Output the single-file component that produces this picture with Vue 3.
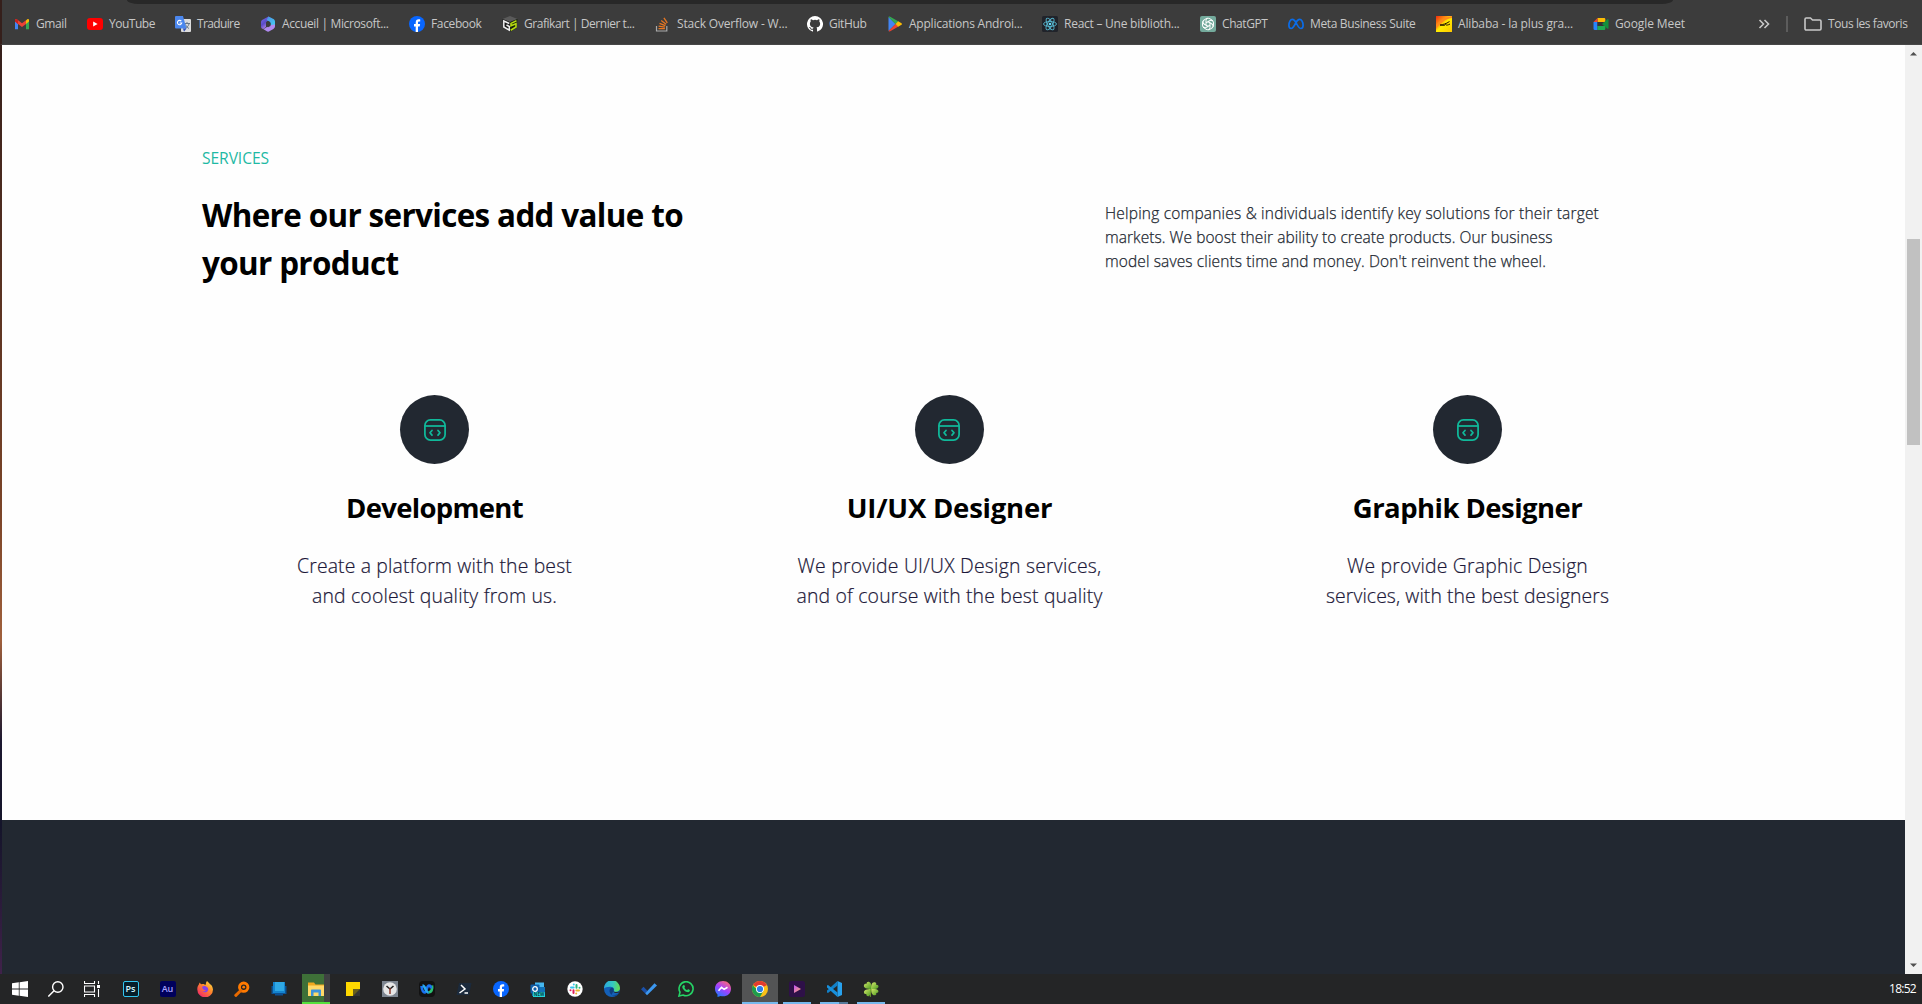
<script setup>
const bookmarks = [
  { icon: 'gmail', label: 'Gmail', slot: 73, text: 30.5 },
  { icon: 'youtube', label: 'YouTube', slot: 88, text: 46 },
  { icon: 'translate', label: 'Traduire', slot: 85, text: 42.5 },
  { icon: 'm365', label: 'Accueil | Microsoft...', slot: 149, text: 106.5 },
  { icon: 'facebook', label: 'Facebook', slot: 93, text: 50.5 },
  { icon: 'grafikart', label: 'Grafikart | Dernier t...', slot: 153, text: 110.5 },
  { icon: 'stack', label: 'Stack Overflow - W...', slot: 152, text: 110.5 },
  { icon: 'github', label: 'GitHub', slot: 80, text: 37.5 },
  { icon: 'play', label: 'Applications Androi...', slot: 155, text: 113.5 },
  { icon: 'react', label: 'React – Une biblioth...', slot: 158, text: 115.5 },
  { icon: 'gpt', label: 'ChatGPT', slot: 88, text: 45.5 },
  { icon: 'meta', label: 'Meta Business Suite', slot: 148, text: 105.5 },
  { icon: 'alibaba', label: 'Alibaba - la plus gra...', slot: 157, text: 115 },
  { icon: 'meet', label: 'Google Meet', slot: 100, text: 70 },
]

const intro = [
  { text: 'Helping companies & individuals identify key solutions for their target', width: 494 },
  { text: 'markets. We boost their ability to create products. Our business', width: 447.5 },
  { text: "model saves clients time and money. Don't reinvent the wheel.", width: 441 },
]

const services = [
  {
    title: 'Development', width: 177, nudge: 1,
    lines: [
      { text: 'Create a platform with the best', width: 275 },
      { text: 'and coolest quality from us.', width: 245 },
    ],
  },
  {
    title: 'UI/UX Designer', width: 205.5, nudge: -1,
    lines: [
      { text: 'We provide UI/UX Design services,', width: 304 },
      { text: 'and of course with the best quality', width: 306 },
    ],
  },
  {
    title: 'Graphik Designer', width: 229.5, nudge: 1,
    lines: [
      { text: 'We provide Graphic Design', width: 241 },
      { text: 'services, with the best designers', width: 283 },
    ],
  },
]

const apps = [
  { icon: 'ps', letters: 'Ps' }, { icon: 'au', letters: 'Au' }, { icon: 'firefox' }, { icon: 'openvpn' }, { icon: 'pc' },
  { icon: 'explorer', state: 'progress' }, { icon: 'notes' }, { icon: 'clock' }, { icon: 'webex' },
  { icon: 'shell' }, { icon: 'facebook' }, { icon: 'outlook', tag: 'NEW' }, { icon: 'slack' }, { icon: 'edge' },
  { icon: 'todo' }, { icon: 'whatsapp' }, { icon: 'messenger' }, { icon: 'chrome', state: 'focused' },
  { icon: 'video', state: 'open' }, { icon: 'vscode', state: 'open stacked' }, { icon: 'clover', state: 'open' },
]

// Spreads the letters of a single line so that it fills the given width.
const vFit = {
  mounted(el, { value }) {
    const natural = el.getBoundingClientRect().width
    el.style.letterSpacing = `${(value - natural) / el.textContent.length}px`
  },
}
</script>

<template>
  <div class="screen">
    <svg class="sprites" width="0" height="0" aria-hidden="true">
      <defs>
        <linearGradient id="g365" x1="0" y1="0" x2="0.7" y2="1"><stop offset="0" stop-color="#7d6cf0" /><stop offset=".5" stop-color="#5a4cc8" /><stop offset="1" stop-color="#d59bf5" /></linearGradient>
        <linearGradient id="g365b" x1="0" y1="0" x2="1" y2="1"><stop offset="0" stop-color="#4f8fe8" /><stop offset="1" stop-color="#3fd0f0" /></linearGradient>
        <linearGradient id="gAli" x1="0" y1="0" x2="1" y2="1"><stop offset="0" stop-color="#f02a10" /><stop offset=".35" stop-color="#ff9a10" /><stop offset=".5" stop-color="#ffee00" /><stop offset="1" stop-color="#ffc800" /></linearGradient>
        <linearGradient id="gFox" x1="1" y1="0" x2=".2" y2="1"><stop offset="0" stop-color="#fff04a" /><stop offset=".45" stop-color="#ff8a2a" /><stop offset="1" stop-color="#f0246a" /></linearGradient>
        <linearGradient id="gMsg" x1=".2" y1="1" x2=".8" y2="0"><stop offset="0" stop-color="#1a7cff" /><stop offset=".5" stop-color="#a340ff" /><stop offset="1" stop-color="#ff6a70" /></linearGradient>
        <linearGradient id="gEdge" x1="0" y1=".3" x2="1" y2=".4"><stop offset="0" stop-color="#2aa8e0" /><stop offset=".55" stop-color="#35c9c0" /><stop offset="1" stop-color="#66dc50" /></linearGradient>
        <linearGradient id="gVid" x1="0" y1="0" x2="1" y2="1"><stop offset="0" stop-color="#c050ff" /><stop offset="1" stop-color="#ffb060" /></linearGradient>
        <linearGradient id="gLeaf" x1="0" y1="0" x2="1" y2="1"><stop offset="0" stop-color="#d4e86a" /><stop offset="1" stop-color="#4a9a20" /></linearGradient>
      </defs>
      <symbol id="i-gmail" viewBox="0 0 16 16">
        <path d="M1 4v9.200h3V7.400z" fill="#4285f4" /><path d="M15 4v9.200h-3V7.400z" fill="#34a853" />
        <path d="M12 4.400 13.300 3.300C14.200 2.700 15 3.300 15 4.300v1.300l-3 2.300z" fill="#fbbc04" />
        <path d="M1 5.600V4.300c0-1 .9-1.600 1.800-1L8 7.200l4-2.900v3.600l-4 3-4-3z" fill="#ea4335" /><path d="M1 4.300c0-1 .9-1.600 1.800-1L4 4.300v3.600L1 5.600z" fill="#c5221f" />
      </symbol>
      <symbol id="i-youtube" viewBox="0 0 16 16"><rect y="2" width="16" height="12" rx="3" fill="#f00" /><path d="M6.200 5.500v5L10.600 8z" fill="#fff" /></symbol>
      <symbol id="i-translate" viewBox="0 0 16 16">
        <rect x="6" y="3" width="10" height="13" rx="1" fill="#dcdcdc" />
        <path d="M9 7.500h6M12 6v1.500M14 8c-.6 2-2 3.500-4 4.500M10.500 8.500c.8 2 2 3 3.500 4" stroke="#68788a" fill="none" />
        <path d="M1 0h7l3.500 12.500H1a1 1 0 0 1-1-1V1a1 1 0 0 1 1-1z" fill="#4b87ee" /><path d="M8 12.500h3.500L9 15.800z" fill="#3453b8" />
        <path d="M6.300 5.100A2.200 2.200 0 1 0 6.800 7H4.600" fill="none" stroke="#fff" stroke-width="1.100" />
      </symbol>
      <symbol id="i-m365" viewBox="0 0 16 16">
        <path d="M8.500.5 3 3.400C1.500 4.200 1 5 1 6.200v4.200C1 12 2 13 3.500 12.800L6 11V7.300c0-1 .5-1.700 1.500-2.200L12 3z" fill="url(#g365)" />
        <path d="M8.500.5 13 2.800c1.300.7 2 1.500 2 3V10l-4.500-1V7.500c0-1-.4-1.600-1.200-2L6.500 4z" fill="url(#g365b)" />
        <path d="M15 8.500v1.800c0 1.300-.6 2-1.600 2.600l-3.600 2.200c-1.200.7-2.200.7-3.400 0l-3.600-2.300c3 .2 5-3.200 7.700-3.800z" fill="#b08af0" />
        <path d="m6 7 2.300-1.800L10.500 7v3L8 11.300 6 10z" fill="#3c3c3c" />
      </symbol>
      <symbol id="i-facebook" viewBox="0 0 16 16"><circle cx="8" cy="8" r="8" fill="#0866ff" /><path d="M6.700 16v-5.600H5V8h1.700V6.700c0-2.300 1-3.400 3.200-3.400.5 0 1 .1 1.300.2v2.100h-.9c-1 0-1.300.5-1.300 1.400v1h2.100l-.4 2.400H9V16z" fill="#fff" /></symbol>
      <symbol id="i-grafikart" viewBox="0 0 16 16">
        <path d="m8 0 7.500 3L8 6 .5 3z" fill="#5a5a5a" /><path d="M.5 3 8 6v9.800L1.500 12z" fill="#181818" /><path d="M15.500 3 8 6v9.800l6.500-3.800z" fill="#16200a" />
        <path d="M7.300 7.500 1.800 5v6l5.500 3.200v-3.700L4.500 9" fill="none" stroke="#eee" stroke-width="1.500" /><path d="M14.500 4.800 9 7.400v2.400l5-2V11l-5.300 3.200" fill="none" stroke="#b4d812" stroke-width="1.600" />
      </symbol>
      <symbol id="i-stack" viewBox="0 0 16 16">
        <path d="M1.500 10v5h10.300v-5" fill="none" stroke="#aaa" stroke-width="1.200" />
        <path d="M3.500 12.700h6.400M3.600 10.200l6.300.9M4.500 7.300l5.900 2.300M6.200 4.400l4.900 3.800M8.900 1.800l3.400 5" stroke="#e87722" stroke-width="1.300" />
      </symbol>
      <symbol id="i-github" viewBox="0 0 16 16"><path d="M8 0a8 8 0 0 0-2.530 15.590c.4.070.550-.170.550-.380l-.010-1.490c-2.010.370-2.530-.490-2.690-.940-.090-.230-.480-.940-.820-1.130-.280-.150-.680-.520-.010-.530.630-.010 1.080.580 1.230.820.720 1.210 1.870.870 2.330.660.070-.520.280-.870.510-1.070-1.780-.2-3.640-.890-3.640-3.950 0-.870.310-1.590.820-2.150-.080-.2-.360-1.020.080-2.120 0 0 .670-.210 2.200.820a7.600 7.600 0 0 1 4 0c1.530-1.040 2.200-.820 2.200-.820.440 1.100.160 1.920.080 2.120.510.560.820 1.270.820 2.150 0 3.070-1.870 3.750-3.650 3.950.290.250.540.730.540 1.480l-.010 2.200c0 .210.150.460.550.380A8 8 0 0 0 8 0z" fill="#fff" /></symbol>
      <symbol id="i-play" viewBox="0 0 16 16">
        <path d="M1.500 1v14l7-7z" fill="#4285f4" /><path d="M1.500 1c.5-.6 1-.6 1.700-.2L11.500 5.400 8.500 8z" fill="#34a853" /><path d="M1.500 15c.5.600 1 .600 1.700.200L11.500 10.600 8.500 8z" fill="#ea4335" /><path d="m11.200 5.300 3.300 1.900c.7.500.7 1.100 0 1.600l-3.300 1.900L8.500 8z" fill="#fbbc04" />
      </symbol>
      <symbol id="i-react" viewBox="0 0 16 16">
        <rect width="16" height="16" rx="1.500" fill="#20232a" />
        <g fill="none" stroke="#58b8d0" stroke-width=".9"><ellipse cx="8" cy="8" rx="6.500" ry="2.500" /><ellipse cx="8" cy="8" rx="6.500" ry="2.500" transform="rotate(60 8 8)" /><ellipse cx="8" cy="8" rx="6.500" ry="2.500" transform="rotate(120 8 8)" /></g><circle cx="8" cy="8" r="1.300" fill="#61dafb" />
      </symbol>
      <symbol id="i-gpt" viewBox="0 0 16 16">
        <rect width="16" height="16" rx="2" fill="#74aa9c" />
        <g fill="none" stroke="#fff" stroke-width="1"><path v-for="a in 6" :key="a" d="M6 5.200V4.600A2.500 2.500 0 0 1 10 2.800L13 4.800M6 5v4" :transform="`rotate(${a * 60} 8 8)`" /></g>
      </symbol>
      <symbol id="i-meta" viewBox="0 0 16 16"><path d="M8 6.500C6.800 4.300 5.800 3.300 4.400 3.300 2.400 3.300.9 6.200.9 9.300c0 2 .8 3.200 2.200 3.200 1.700 0 2.800-1.800 4.900-6 1-2 2.100-3.200 3.600-3.200 2 0 3.500 2.900 3.500 6 0 2-.8 3.200-2.200 3.200-1.600 0-2.700-1.500-4.900-6" fill="none" stroke="#0a6ce8" stroke-width="1.700" /></symbol>
      <symbol id="i-alibaba" viewBox="0 0 16 16"><rect width="16" height="16" fill="url(#gAli)" /><path d="M0 9C3 5 7 2 12 1L16 0v2C9 3 4 7 0 13z" fill="#ff8a1c" /><path d="M4 9c3-.5 6-1 9.500-3.500M9.500 7.500C9 9.500 11.500 9.500 14 8M4 9c2 .8 3.500.5 5 0" stroke="#201000" stroke-width="1" fill="none" /></symbol>
      <symbol id="i-meet" viewBox="0 0 16 16">
        <path d="M4.500 2H11c.8 0 1.300.5 1.300 1.200V6H4.500z" fill="#fbbc04" /><path d="M4.500 2v4H.5z" fill="#ea4335" /><path d="M.5 6h4v8H1.700C1 14 .5 13.500.5 12.800z" fill="#2684fc" /><path d="M4.500 10h7.800v2.700c0 .8-.5 1.300-1.300 1.300H4.500z" fill="#1faa50" /><path d="M4.500 6H10v4H4.500z" fill="#333" /><path d="m9 8 5.500-4.800c.5-.3 1-.1 1 .5v8.600c0 .6-.5.800-1 .5z" fill="#12903c" />
      </symbol>

      <symbol id="i-firefox" viewBox="0 0 16 16">
        <path d="M10 0c1 1.200 2 1.600 3 3.200 1-.2 3 2.800 3 5.300a7.800 7.800 0 0 1-15.700 0C.2 6 1 4.300 2 3.200c.2-.8.700-1.600 1-1.700.2 1 .8 1.500 1.500 1.800C6.500 2.600 8 3.800 8.500 4 9.200 2.300 8.800 1.200 10 0z" fill="url(#gFox)" /><path d="M5 6c1-1.200 2.700-1.300 4-.6 1.800.6 2.600 2.300 2 4.100-.9 2.100-4 2.500-5.400.8C7 10.600 8.300 9.800 8.600 9 7 9 5.500 8.500 5 6z" fill="#8542e8" />
      </symbol>
      <symbol id="i-openvpn" viewBox="0 0 16 16"><circle cx="9.700" cy="6.200" r="4.200" fill="none" stroke="#ff7a00" stroke-width="2.900" /><circle cx="9.700" cy="6.200" r="1.400" fill="#ff7a00" /><path d="m6.800 9.500-5 4.800" stroke="#e86a00" stroke-width="3" stroke-linecap="round" /></symbol>
      <symbol id="i-pc" viewBox="0 0 16 16"><path d="M.5 5h15v8H.5z" fill="#0b5394" /><path d="M2 1h12v11H2z" fill="#1484cf" /><path d="M4 1h9v9H4z" fill="#2fa8e4" /><path d="M4 12h8v2.500H4z" fill="#0c4f90" /></symbol>
      <symbol id="i-explorer" viewBox="0 0 16 16"><path d="M0 1.500h6l1.500 2H16V14H0z" fill="#f0a81e" /><path d="M0 4.500h16V15H0z" fill="#ffd968" /><path d="M3 15V9.500c0-.6.4-1 1-1h8c.6 0 1 .4 1 1V15h-2.500v-3.500h-5V15z" fill="#3d93dc" /></symbol>
      <symbol id="i-notes" viewBox="0 0 16 16"><path d="M1 1h14v14H1z" fill="#ffd800" /><path d="M8 8h7v7H8z" fill="#343434" /><path d="M8 15V8h7z" fill="#69601c" /></symbol>
      <symbol id="i-clock" viewBox="0 0 16 16"><rect width="16" height="16" fill="#7d8590" /><circle cx="8" cy="8" r="6.800" fill="#e6e6e6" /><path d="M8 8 4.500 5M8 8l3.500-3" stroke="#222" stroke-width="1.600" /><path d="M8 7v6" stroke="#8a3020" stroke-width="1.400" /></symbol>
      <symbol id="i-webex" viewBox="0 0 16 16"><rect width="16" height="16" rx="4" fill="#121212" /><g fill="none" stroke-width="2.600"><path d="M9.500 11.500c2.500 0 4.500-3 3.500-7" stroke="#2cc070" /><path d="M2.500 5c.3 4.500 2 7 3.700 6.300C8 10.500 7.500 4.600 10 4.600c1.500 0 2 1.500 2 3" stroke="#1a70f0" /><path d="M3.500 4.600c3.200 0 2.500 6.900 6.200 6.900" stroke="#28a8f0" /></g></symbol>
      <symbol id="i-shell" viewBox="0 0 16 16"><path d="M3 2h12.500L13 14H.5z" fill="#1b2a3c" /><path d="m5 4 4 4-5.500 4M8.500 12H12" fill="none" stroke="#fff" stroke-width="1.500" /></symbol>
      <symbol id="i-outlook" viewBox="0 0 16 16"><path d="M5 1.500h9V10H5z" fill="#46b8f0" /><path d="M2 6h13v9H2z" fill="#1272b8" /><rect x=".5" y="3.500" width="9" height="9" rx="1" fill="#0f5ea8" /><circle cx="5" cy="8" r="2.300" fill="none" stroke="#fff" stroke-width="1.300" /></symbol>
      <symbol id="i-slack" viewBox="0 0 16 16"><circle cx="8" cy="8" r="7.700" fill="#fff" /><g stroke-width="2" stroke-linecap="round"><path d="M4 6.500h2.700M6.800 3.500v0" stroke="#36c5f0" /><path d="M9.500 4v2.700M12.500 6.700v0" stroke="#2eb67d" /><path d="M12 9.500H9.300M9.200 12.500v0" stroke="#ecb22e" /><path d="M6.500 12V9.300M3.500 9.300v0" stroke="#e01e5a" /></g></symbol>
      <symbol id="i-edge" viewBox="0 0 16 16"><circle cx="8" cy="8" r="8" fill="#1460b8" /><path d="M0 7.500A8 8 0 0 1 16 7c0 2.500-2 3.700-4 3.700-1.500 0-2.500-.5-2-1.400C10.500 7 8.500 5.500 6 5.700 3 5.800 1 6.500 0 7.500z" fill="url(#gEdge)" /><path d="M9.500 9.700c.5-1 .2-2.500-1-3-2 0-3.300 1.600-3 3.700.4 2.400 2.500 4 5 3.600 2-.2 3.500-1.200 4.500-2.500l.5.500-3 3-5-1" fill="#0e3f80" /><path d="M9.500 9.700c0 1.300 2.500 1.800 5.500.8l.4.800c-2 1-4.800.9-5.800-.3z" fill="#242424" /></symbol>
      <symbol id="i-todo" viewBox="0 0 16 16"><path d="m0 8.200 2.500-2.500 4.200 4.200-2.400 2.500z" fill="#1b50a8" /><path d="m4.200 12.300 9.300-10L16 4.600 6 14.200z" fill="#3c98f0" /></symbol>
      <symbol id="i-whatsapp" viewBox="0 0 16 16"><path d="m1 15 1-3.800A7 7 0 1 1 5 14z" fill="none" stroke="#25d366" stroke-width="1.600" /><path d="M5.300 4.200c.5-.4 1-.3 1.200.2l.5 1.300c0 .4-.3.700-.6 1 .6 1.200 1.500 2 2.700 2.500l.8-.9c.4-.2 1.800.6 2 .9.200.7-.6 1.900-1.800 2-2.600 0-5.700-3-5.900-5.200 0-.8.500-1.400 1.100-1.800z" fill="#25d366" /></symbol>
      <symbol id="i-messenger" viewBox="0 0 16 16"><path d="M8 0c4.600 0 8 3.300 8 7.700 0 4.500-3.400 7.600-8 7.600-.8 0-1.600-.1-2.300-.3L2.500 16v-2.500C1 12 0 10 0 7.700 0 3.300 3.400 0 8 0z" fill="url(#gMsg)" /><path d="m3.500 9.700 3-3.300 2.600 2 3.400-2.100" fill="none" stroke="#fff" stroke-width="1.600" /></symbol>
      <symbol id="i-chrome" viewBox="0 0 16 16"><circle cx="8" cy="8" r="8" fill="#fbc016" /><path d="M8 8 1.070 4A8 8 0 0 1 14.930 4z" fill="#e33b2e" /><path d="M8 16A8 8 0 0 1 1.070 4L4.600 10z" fill="#1e9c4d" /><path d="M8 16A8 8 0 0 1 2 6l6 4h3.400z" fill="#1e9c4d" /><circle cx="8" cy="8" r="4" fill="#fff" /><circle cx="8" cy="8" r="3.100" fill="#2a7de8" /></symbol>
      <symbol id="i-video" viewBox="0 0 16 16"><rect width="16" height="16" rx="2.500" fill="#2e1048" /><path d="M5 4v8l7-4z" fill="url(#gVid)" /></symbol>
      <symbol id="i-vscode" viewBox="0 0 16 16"><path d="M11.500 0 16 2v12l-4.500 2z" fill="#28a2ee" /><path d="M11.500 0 1 9.500v2L2 12l9.500-7.500z" fill="#1180c8" /><path d="M11.500 16 1 6.500v-2L2 4l9.500 7.500z" fill="#1890dc" /></symbol>
      <symbol id="i-clover" viewBox="0 0 16 16"><g fill="url(#gLeaf)"><path d="M8 8C4 8 0 7 1 4c.5-1.500 2-1.500 2.500-1C3.500 1 5 .3 6.300 1 8.500 2 8.500 5 8 8z" /><path d="M8 8c0-4 1-7.500 4-6.700 1.500.5 1.500 1.700 1 2.400C15 3.500 16 5 15.300 6.300 14 8.500 11 8.300 8 8z" /><path d="M8 8c-3.800 0-7.500 1-7 3.800.3 1.400 1.600 1.500 2.300 1.100 0 2 1.500 2.700 2.800 2C8 14 8.300 11 8 8z" /><path d="M8 8c0 3.500 1.500 7 4.200 6.200 1.400-.5 1.300-1.700.9-2.300 1.900.1 2.800-1.300 2.100-2.500C14.200 7.700 11 8 8 8z" /></g><path d="M8 8 7.300 16" stroke="#6a9a28" /></symbol>
    </svg>

    <header class="browser">
      <div class="omnibox-edge"></div>
      <nav class="bookmarks">
        <a v-for="b in bookmarks" :key="b.label" class="bookmark" :style="{ width: b.slot + 'px' }">
          <svg class="icon"><use :href="'#i-' + b.icon" /></svg>
          <span v-fit="b.text">{{ b.label }}</span>
        </a>
        <svg class="more" viewBox="0 0 12 10"><path d="m1.500 1 4 4-4 4M6.500 1l4 4-4 4" fill="none" stroke="#c7c7c7" stroke-width="1.600" /></svg>
        <i class="divider"></i>
        <svg class="folder" viewBox="0 0 18 14"><path d="M1 2.300C1 1.500 1.500 1 2.200 1h4.300l2 2h7.300c.7 0 1.200.5 1.200 1.200v7.600c0 .7-.5 1.200-1.200 1.200H2.200C1.500 13 1 12.500 1 11.800z" fill="none" stroke="#c7c7c7" stroke-width="1.600" /></svg>
        <span v-fit="79.5">Tous les favoris</span>
      </nav>
    </header>

    <div class="viewport">
      <i class="wallpaper"></i>
      <main class="page">
        <section class="services">
          <p class="eyebrow"><span v-fit="67">SERVICES</span></p>
          <div class="lead">
            <h2>
              <span v-fit="481">Where our services add value to</span><br />
              <span v-fit="196.5">your product</span>
            </h2>
            <p class="intro">
              <template v-for="line in intro" :key="line.text"><span v-fit="line.width">{{ line.text }}</span><br /></template>
            </p>
          </div>
          <div class="cards">
            <article v-for="s in services" :key="s.title" class="card">
              <div class="badge">
                <svg class="code" :style="{ marginLeft: s.nudge + 'px' }" viewBox="0 0 22 22" fill="none" stroke="#10b99a" stroke-width="1.750">
                  <rect x=".9" y=".9" width="20.200" height="20.200" rx="5.500" />
                  <path d="M1 7h20" />
                  <path d="m8 11.500-2 2.300 2 2.300M14 11.500l2 2.300-2 2.300" stroke-linecap="round" stroke-linejoin="round" />
                </svg>
              </div>
              <h3><span v-fit="s.width">{{ s.title }}</span></h3>
              <p>
                <template v-for="line in s.lines" :key="line.text"><span v-fit="line.width">{{ line.text }}</span><br /></template>
              </p>
            </article>
          </div>
        </section>
        <section class="dark"></section>
      </main>
      <aside class="scrollbar">
        <svg viewBox="0 0 17 17"><path d="M5 10.500 8.500 7l3.500 3.500z" fill="#505050" /></svg>
        <i class="thumb"></i>
        <svg viewBox="0 0 17 17"><path d="m5 6.500 3.500 3.500L12 6.500z" fill="#505050" /></svg>
      </aside>
    </div>

    <footer class="taskbar">
      <div class="system"><svg viewBox="0 0 16 16" class="icon"><path d="M0 2.200 6.800 1.300v6.300H0zM7.600 1.200 16 0v7.600H7.600zM0 8.400h6.800v6.400L0 13.800zM7.600 8.400H16V16l-8.400-1.200z" fill="#fff" /></svg></div>
      <div class="system"><svg viewBox="0 0 16 16" class="icon"><circle cx="9.800" cy="6" r="5.200" fill="none" stroke="#fff" stroke-width="1.400" /><path d="m6 9.800-5.700 5.700" stroke="#fff" stroke-width="1.500" /></svg></div>
      <div class="system"><svg viewBox="0 0 16 16" class="icon"><path d="M.5 0v2.500h10V0M.5 16v-2.500h10V16M.5 5h10v6H.5zM14.500 0v3M14.500 8v8" fill="none" stroke="#fff" stroke-width="1.100" /><path d="M13 4h3v3h-3z" fill="#fff" /></svg></div>
      <div class="apps">
        <div v-for="a in apps" :key="a.icon" class="app" :class="a.state">
          <span v-if="a.letters" class="tile" :class="a.icon">{{ a.letters }}</span>
          <svg v-else class="icon"><use :href="'#i-' + a.icon" /></svg>
          <small v-if="a.tag" class="tag">{{ a.tag }}</small>
        </div>
      </div>
      <time><span v-fit="27">18:52</span></time>
    </footer>
  </div>
</template>

<style>
body {
  margin: 0;
  overflow: hidden;
}
</style>

<style scoped>
.screen {
  width: 1922px;
  height: 1004px;
  display: flex;
  flex-direction: column;
  font-family: "Open Sans", "Noto Sans", sans-serif;
  white-space: nowrap;
  overflow: hidden;
}
.sprites { position: absolute; }
.icon { width: 16px; height: 16px; flex: none; display: block; }

.browser {
  height: 45px;
  box-sizing: border-box;
  background: #3c3c3c;
  border-left: 2px solid #351f1b;
  border-bottom: 1px solid #474747;
}
.omnibox-edge {
  width: 1546px;
  height: 4px;
  margin-left: 125px;
  background: #282828;
  border-radius: 0 0 12px 12px / 0 0 4px 4px;
}
.bookmarks {
  height: 40px;
  padding-left: 12px;
  display: flex;
  align-items: center;
  color: #c7c7c7;
  font-size: 12px;
}
.bookmarks span { line-height: 16px; padding-bottom: 1px; }
.bookmark { display: flex; align-items: center; gap: 6px; flex: none; }
.more { width: 12px; height: 10px; margin-left: 65px; }
.divider { width: 2px; height: 16px; margin: 0 16px; background: #5c5c5c; }
.folder { width: 18px; height: 14px; margin-right: 6px; }

.viewport { height: 929px; display: flex; }
.wallpaper {
  width: 2px;
  background: linear-gradient(#351f1b, #7a4428 50%, #a0603c 64%, #1c1830 75%, #14142a 84%, #40224a);
}
.page { width: 1903px; background: #fff; display: flex; flex-direction: column; }
.services { height: 775px; box-sizing: border-box; padding: 101px 0 0 200px; background: #fefefe; }
p, h2, h3 { margin: 0; }
.eyebrow { font-size: 15.600px; line-height: 24px; color: #1fb9a4; }
.lead { display: flex; align-items: center; padding-top: 21px; }
h2 { width: 903px; font-size: 31.400px; line-height: 48px; font-weight: 700; color: #000; }
.intro { font-size: 15.500px; line-height: 24px; font-weight: 300; color: #222831; -webkit-text-stroke: .25px #222831; padding-bottom: 5px; }
.cards { display: flex; padding-top: 108px; margin-left: -24px; }
.card { width: 513px; display: flex; flex-direction: column; align-items: center; text-align: center; }
.card:nth-child(2) { width: 517px; }
.card:last-child { width: 519px; }
.badge {
  width: 69px;
  height: 69px;
  border-radius: 50%;
  background: #222831;
  display: flex;
  align-items: center;
  justify-content: center;
}
.code { width: 22px; height: 22px; padding-top: 1px; }
h3 { margin-top: 23px; font-size: 27.500px; line-height: 42px; font-weight: 700; color: #000; }
.card p { margin-top: 22px; font-size: 19.400px; line-height: 30px; font-weight: 300; color: #1b1738; -webkit-text-stroke: .2px #1b1738; }
.dark { flex: 1; background: #222831; }

.scrollbar { width: 17px; background: #f1f1f1; display: flex; flex-direction: column; align-items: center; }
.scrollbar svg { width: 17px; height: 17px; flex: none; }
.thumb { width: 13px; height: 206px; margin: 177px 0 512px; background: #c1c1c1; }

.taskbar {
  height: 30px;
  box-sizing: border-box;
  padding: 0 6px 0 2px;
  background: #242526;
  display: flex;
  align-items: center;
}
.system { width: 36px; display: flex; justify-content: center; }
.apps { display: flex; height: 30px; margin-left: 2px; }
.app { position: relative; width: 37px; height: 30px; display: flex; align-items: center; justify-content: center; }
.tile {
  width: 16px;
  height: 16px;
  box-sizing: border-box;
  border-radius: 2px;
  font-size: 9px;
  font-weight: 600;
  line-height: 15px;
  text-align: center;
}
.ps { border: 1px solid #31c5f0; background: #061e2a; color: #d8f4ff; line-height: 13px; }
.au { background: #00005b; color: #a8a0ff; }
.tag {
  position: absolute;
  left: 14px;
  top: 18px;
  width: 12px;
  height: 5px;
  background: #22d4d8;
  color: #063c46;
  font-size: 4.500px;
  font-weight: 700;
  line-height: 5px;
  text-align: center;
}
.open { background: linear-gradient(#76b9ed, #76b9ed) center bottom / 28px 2px no-repeat; }
.stacked {
  background:
    linear-gradient(90deg, #76b9ed 19px, #56799a 19px) center bottom / 28px 2px no-repeat;
}
.progress {
  background:
    linear-gradient(#54e03c, #54e03c) center bottom / 28px 2px no-repeat,
    linear-gradient(90deg, #3e7038 22px, #3e4042 22px) center / 28px 30px no-repeat;
}
.focused {
  background:
    linear-gradient(#76b9ed, #76b9ed) center bottom / 36px 2px no-repeat,
    linear-gradient(#535455, #535455) center / 36px 30px no-repeat;
}
time { margin-left: auto; color: #fff; font-size: 12px; line-height: 16px; }
</style>
